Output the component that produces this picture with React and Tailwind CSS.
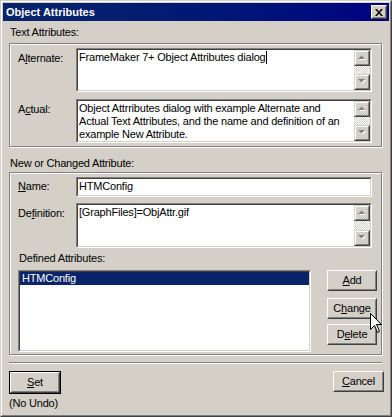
import React from 'react';

const FACE = 'bg-[#d4d0c8]';

function U({ children }) {
  return <span className="underline underline-offset-[1px]">{children}</span>;
}

function Arrow({ dir }) {
  // disabled (greyed) scroll arrow with white emboss
  const pts = dir === 'up' ? '0,4 7,4 3.5,0.5' : '0,0 7,0 3.5,3.5';
  return (
    <svg width="9" height="6" viewBox="0 0 9 6" className="block">
      <polygon points={pts} transform="translate(1,1)" fill="#ffffff" />
      <polygon points={pts} fill="#808080" />
    </svg>
  );
}

function ScrollButton({ dir }) {
  return (
    <div className={`w-[16px] h-[16px] ${FACE} border border-t-[#d4d0c8] border-l-[#d4d0c8] border-b-[#404040] border-r-[#404040]`}>
      <div className="w-full h-full flex items-center justify-center border border-t-white border-l-white border-b-[#808080] border-r-[#808080]">
        <Arrow dir={dir} />
      </div>
    </div>
  );
}

function ScrollBar() {
  return (
    <div className="w-[16px] flex flex-col shrink-0">
      <ScrollButton dir="up" />
      <div className="flex-1 bg-[repeating-conic-gradient(#ffffff_0_25%,#d4d0c8_0_50%)] bg-[length:2px_2px]" />
      <ScrollButton dir="down" />
    </div>
  );
}

function Field({ className, scroll, children }) {
  return (
    <div className={`bg-white border border-t-[#808080] border-l-[#808080] border-b-white border-r-white ${className}`}>
      <div className="h-full flex border border-t-[#404040] border-l-[#404040] border-b-[#d4d0c8] border-r-[#d4d0c8]">
        <div className="flex-1 pl-[1px] pt-[1px] overflow-hidden text-black whitespace-nowrap">{children}</div>
        {scroll && <ScrollBar />}
      </div>
    </div>
  );
}

function Button({ className, children, isDefault }) {
  const inner = (
    <div className={`h-full ${FACE} border border-t-white border-l-white border-b-[#404040] border-r-[#404040]`}>
      <div className="h-full flex items-center justify-center border border-t-[#d4d0c8] border-l-[#d4d0c8] border-b-[#808080] border-r-[#808080] text-black">
        {children}
      </div>
    </div>
  );
  if (isDefault) {
    return <div className={`border border-black ${className}`}>{inner}</div>;
  }
  return <div className={className}>{inner}</div>;
}

function Row({ label, pt, children, className }) {
  return (
    <div className={`flex ${className || ''}`}>
      <div className="w-[58px] shrink-0" style={{ paddingTop: pt }}>
        {label}
      </div>
      {children}
    </div>
  );
}

export default function App() {
  return (
    <div className="w-[392px] h-[417px] font-['Liberation_Sans',Arial,sans-serif] text-[11px] leading-[13px] tracking-[-0.2px] text-black select-none">
      <div className={`relative w-full h-full ${FACE} border border-t-[#d4d0c8] border-l-[#d4d0c8] border-b-[#404040] border-r-[#404040]`}>
        <div className="w-full h-full border border-t-white border-l-white border-b-[#808080] border-r-[#808080] p-[1px] flex flex-col">
          {/* title bar */}
          <div className="h-[18px] shrink-0 flex items-center justify-between bg-gradient-to-r from-[#0a246a] to-[#000080] pl-[3px] pr-[2px]">
            <span className="font-bold text-white tracking-normal">Object Attributes</span>
            <Button className="w-[16px] h-[14px]">
              <svg width="8" height="7" viewBox="0 0 8 7" className="block">
                <path d="M0 0h2l2 2.5L6 0h2L5 3.5 8 7H6L4 4.5 2 7H0l3-3.5z" fill="#000" />
              </svg>
            </Button>
          </div>

          {/* body */}
          <div className="flex flex-col pl-[6px] pt-[5px]">
            <div className="pl-[1px]">Text Attributes:</div>

            <div className="mt-[4px] w-[373px] h-[104px] border border-[#808080] shadow-[inset_1px_1px_0_#ffffff,1px_1px_0_#ffffff] pl-[8px] pt-[4px] flex flex-col">
              <Row label={<>A<U>l</U>ternate:</>} pt={4}>
                <Field className="w-[296px] h-[44px]" scroll>
                  FrameMaker 7+ Object Attributes dialog
                  <span className="inline-block w-px h-[13px] bg-black align-top" />
                </Field>
              </Row>
              <Row label={<>A<U>c</U>tual:</>} pt={4} className="mt-[7px]">
                <Field className="w-[296px] h-[44px]" scroll>
                  Object Attrributes dialog with example Alternate and
                  <br />
                  Actual Text Attributes, and the name and definition of an
                  <br />
                  example New Attribute.
                </Field>
              </Row>
            </div>

            <div className="mt-[10px] pl-[1px]">New or Changed Attribute:</div>

            <div className="mt-[2px] w-[373px] h-[183px] border border-[#808080] shadow-[inset_1px_1px_0_#ffffff,1px_1px_0_#ffffff] pl-[8px] pt-[4px] flex flex-col">
              <Row label={<><U>N</U>ame:</>} pt={3}>
                <Field className="w-[296px] h-[20px]">HTMConfig</Field>
              </Row>
              <Row label={<>De<U>f</U>inition:</>} pt={4} className="mt-[6px]">
                <Field className="w-[296px] h-[45px]" scroll>
                  [GraphFiles]=ObjAttr.gif
                </Field>
              </Row>
              <div className="mt-[4px] pl-[1px]">Defined Attributes:</div>
              <div className="mt-[5px] flex">
                <div className="w-[293px] h-[82px] bg-white border border-t-[#808080] border-l-[#808080] border-b-white border-r-white">
                  <div className="h-full border border-t-[#404040] border-l-[#404040] border-b-[#d4d0c8] border-r-[#d4d0c8]">
                    <div className="h-[13px] bg-[#0a246a] text-white pl-[2px]">HTMConfig</div>
                  </div>
                </div>
                <div className="ml-[16px] flex flex-col">
                  <Button className="w-[50px] h-[21px]">
                    <span><U>A</U>dd</span>
                  </Button>
                  <Button className="mt-[7px] w-[50px] h-[21px]">
                    <span>C<U>h</U>ange</span>
                  </Button>
                  <Button className="mt-[5px] w-[50px] h-[21px]">
                    <span>D<U>e</U>lete</span>
                  </Button>
                </div>
              </div>
            </div>

            <div className="mt-[7px] w-[373px] h-[2px] border-t border-t-[#808080] border-b border-b-white" />

            <div className="mt-[7px] w-[375px] flex justify-between items-start">
              <div className="flex flex-col">
                <Button isDefault className="w-[52px] h-[23px]">
                  <span><U>S</U>et</span>
                </Button>
                <div className="mt-[3px]">(No Undo)</div>
              </div>
              <Button className="w-[51px] h-[21px]">
                <span><U>C</U>ancel</span>
              </Button>
            </div>
          </div>
        </div>

        {/* mouse pointer over Change */}
        <svg width="13" height="21" viewBox="0 0 13 21" className="absolute left-[369px] top-[312px]">
          <path d="M0.5 0.5 V16.5 L4.5 12.5 L7.5 19.5 L9.5 18.5 L6.5 11.5 H11.5 Z" fill="#ffffff" stroke="#000000" strokeWidth="1" />
        </svg>
      </div>
    </div>
  );
}
